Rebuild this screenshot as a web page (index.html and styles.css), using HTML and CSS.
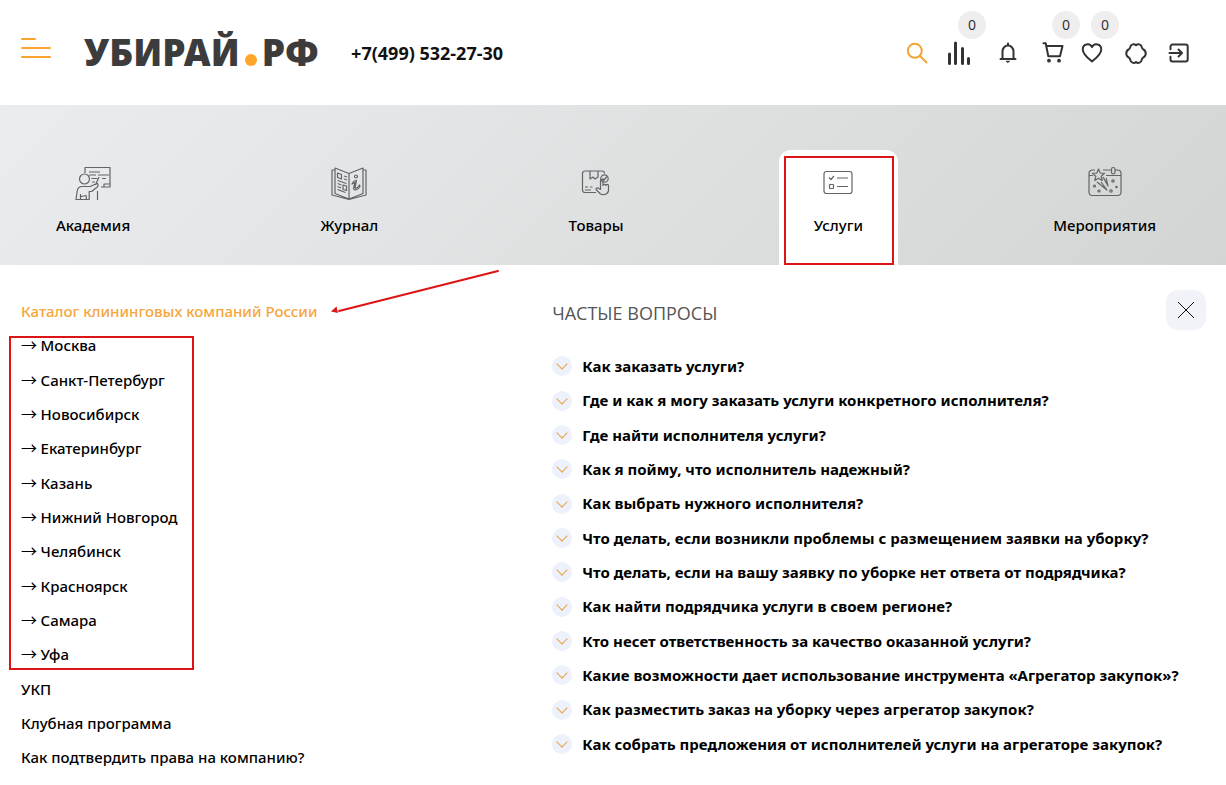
FILE: index.html
```html
<!DOCTYPE html>
<html lang="ru">
<head>
<meta charset="utf-8">
<meta name="viewport" content="width=device-width, initial-scale=1">
<title>Убирай.рф — Услуги</title>
<link rel="stylesheet" href="styles.css">
</head>
<body>
<header class="header">
  <button class="menu-button" type="button" aria-label="Меню">
    <svg width="30" height="20" viewBox="0 0 30 20" fill="none" stroke="#fba42f" stroke-width="2" stroke-linecap="round"><path d="M1 1h13M1 10h28M1 19h28"/></svg>
  </button>
  <a class="logo" href="#"><span>УБИРАЙ</span><i class="logo-dot"></i><span>РФ</span></a>
  <a class="phone" href="tel:+74995322730">+7(499) 532-27-30</a>
  <div class="tools">
    <button class="tool tool-search" type="button" aria-label="Поиск">
      <svg viewBox="0 0 24 24"><circle cx="9.800" cy="9.800" r="7"/><path d="M15 15l6.500 6.500"/></svg>
    </button>
    <button class="tool" type="button" aria-label="Сравнение">
      <svg viewBox="0 0 24 24" class="bars"><path d="M2.500 13v9.500M8.500 2v20.500M15.500 7.500v15M21.500 17.500v5"/></svg>
      <span class="badge">0</span>
    </button>
    <button class="tool" type="button" aria-label="Уведомления">
      <svg viewBox="0 0 24 24"><path d="M4.500 18h15M6.500 18v-7.500a5.500 6 0 0 1 11 0V18M12 4V2.500"/><path d="M10.500 20.300h3L12 21.300z" fill="currentColor" stroke-width="1"/></svg>
    </button>
    <button class="tool" type="button" aria-label="Корзина">
      <svg viewBox="0 0 24 24"><path d="M2.500 2.200h2.200L7.300 15.200h11.700L21.500 5H5.300"/><circle cx="8" cy="19.700" r="1.300" fill="currentColor" stroke-width="1.200"/><circle cx="18" cy="19.700" r="1.300" fill="currentColor" stroke-width="1.200"/></svg>
      <span class="badge">0</span>
    </button>
    <button class="tool" type="button" aria-label="Избранное">
      <svg viewBox="0 0 24 24"><path d="M12 20.500C8.500 17.500 2.800 13.500 2.800 8.500A4.800 4.800 0 0 1 12 6.200a4.800 4.800 0 0 1 9.200 2.300c0 5-5.700 9-9.200 12z"/></svg>
      <span class="badge">0</span>
    </button>
    <button class="tool" type="button" aria-label="Услуги">
      <svg viewBox="0 0 24 24"><path d="M12 4.300c1.700-1.800 5.300-1.300 5.800 1.900.2 1.200.7 1.800 1.600 2.300 3.100 1.600 3.100 6.200 0 7.800-.9.500-1.400 1.100-1.600 2.300-.5 3.200-3.700 4.100-5.800 2.500-2.100 1.600-5.300.7-5.800-2.500-.2-1.200-.7-1.800-1.600-2.300-3.100-1.600-3.100-6.200 0-7.800.9-.5 1.400-1.100 1.600-2.300C6.700 3 10.300 2.500 12 4.300z"/></svg>
    </button>
    <button class="tool" type="button" aria-label="Войти">
      <svg viewBox="0 0 24 24"><path d="M3.500 8.300V5.500a2 2 0 0 1 2-2h13.200a2 2 0 0 1 2 2v13a2 2 0 0 1-2 2H5.500a2 2 0 0 1-2-2v-2.800M2.500 12h12.500M11.500 8.500L15 12l-3.500 3.500"/></svg>
    </button>
  </div>
</header>

<nav class="sections">
  <a class="section" href="#">
    <svg viewBox="0 0 36 36"><path d="M10 8V2.500h25V22h-9M14 7h11M14 10h7M23 10h11M16.500 13.500h6M27 13.500h4M17 17h3M29 22v-3h6"/><circle cx="9.500" cy="14" r="5"/><path d="M1 34.500l1.200-8.500c.5-3 2-4.500 5-4.500h8l5.500-2.500c2-1.500 3.500 1 1.500 3l-5.500 4.500h-2.500v8zM5.500 34.500V29M11.500 34.500l-.5-4-5 1M20.500 20l3.500-8M22.500 26v9"/></svg>
    Академия
  </a>
  <a class="section" href="#">
    <svg viewBox="0 0 36 36"><path d="M4 3l14 5.500L32 3v25.500l-14 5.500-14-5.500zM18 8.500V34M4 5H1v25l17 4.500L35 30V5h-3"/><path d="M6.500 8l4 1.500v4.500l-4-1.500zM13 11l3 1M13 14l3 1M6.500 15.500l9 3M6.500 18.500l4 1.500M12 20l3.500 1v4.500L12 24.500zM6.500 21.500l3.500 1.500M6.500 24.500l8 3"/><circle cx="25" cy="11.500" r="1.500"/><path d="M21 19c1-2.500 3-3.500 4.500-3.500L24 22.500c0 1.500 2.500.5 4.500-2.500l.5 1.500c-2 3.500-6 4.500-6.500 2l1.500-6z"/></svg>
    Журнал
  </a>
  <a class="section" href="#">
    <svg viewBox="0 0 36 36"><path d="M18 27.500H7c-1.500 0-2.500-1-2.500-2.500V8.500C4.500 7 5.500 6 7 6h17c1.500 0 2.500 1 2.500 2.500M12 6v8l3-2 2 2 3-2V6M7 22h3M12 22h2.500M7 25h6"/><circle cx="26.500" cy="13.500" r="3.700"/><path d="M24.500 13.500l1.500 1.500 3-3.500M22.500 15.500v9l-2.500-1.500c-2-.5-2.500 1-1.500 2l4 4c3 1.500 8 .5 8-4V20.500c0-1.500-2.500-1.500-2.500 0-.5-1.500-3-1.500-3 0V15.500c0-1.500-2.500-1.500-2.500 0"/></svg>
    Товары
  </a>
  <a class="section section-active" href="#" aria-current="page">
    <svg viewBox="0 0 36 36"><rect x="4" y="6.500" width="28" height="22" rx="2.500"/><path d="M9 12.500l2 2 3-3.500M17 13h11M17 21.500h11"/><rect x="9.500" y="19.500" width="4" height="4" rx=".5"/></svg>
    Услуги
  </a>
  <a class="section" href="#">
    <svg viewBox="0 0 36 36"><path d="M8 5H5.500A3.500 3.500 0 0 0 2 8.500V27a3.500 3.500 0 0 0 3.500 3.500h25A3.500 3.500 0 0 0 34 27V8.500A3.500 3.500 0 0 0 30.500 5H28M24 5h-8M2 10.500h4M19 10.500h15"/><rect x="24.500" y="2.500" width="3.500" height="6.500" rx="1.700"/><path d="M11.500 4l1.700 4 4.300.4-3.300 2.900 1 4.200-3.700-2.200-3.700 2.200 1-4.200-3.300-2.900 4.300-.4zM10 17l10 8-6-8M16 12l5 9-2-8"/><circle cx="7.500" cy="21" r="1"/><circle cx="12" cy="26" r="1"/><circle cx="26" cy="16" r="1.200"/><circle cx="29.500" cy="22" r=".7"/><circle cx="24" cy="26" r="1.200"/></svg>
    Мероприятия
  </a>
</nav>

<main class="panel">
  <section class="catalog">
    <svg class="pointer" viewBox="0 0 170 46"><path d="M167 2L8 42" stroke="#dc1414" stroke-width="2" stroke-linecap="round"/><path d="M0 42.500l5.500-5 1.500 6.500z" fill="#dc1414"/></svg>
    <a class="catalog-link catalog-title" href="#">Каталог клининговых компаний России</a>
    <ul class="cities">
      <li><a class="catalog-link" href="#">Москва</a></li>
      <li><a class="catalog-link" href="#">Санкт-Петербург</a></li>
      <li><a class="catalog-link" href="#">Новосибирск</a></li>
      <li><a class="catalog-link" href="#">Екатеринбург</a></li>
      <li><a class="catalog-link" href="#">Казань</a></li>
      <li><a class="catalog-link" href="#">Нижний Новгород</a></li>
      <li><a class="catalog-link" href="#">Челябинск</a></li>
      <li><a class="catalog-link" href="#">Красноярск</a></li>
      <li><a class="catalog-link" href="#">Самара</a></li>
      <li><a class="catalog-link" href="#">Уфа</a></li>
    </ul>
    <a class="catalog-link" href="#">УКП</a>
    <a class="catalog-link" href="#">Клубная программа</a>
    <a class="catalog-link" href="#">Как подтвердить права на компанию?</a>
  </section>

  <section class="faq">
    <div class="faq-head">
      <h2 class="faq-title">ЧАСТЫЕ ВОПРОСЫ</h2>
      <button class="close" type="button" aria-label="Закрыть"><svg width="16" height="16" viewBox="0 0 16 16" stroke="#111" stroke-width="1"><path d="M0 0l16 16M16 0L0 16"/></svg></button>
    </div>
    <button class="question" type="button"><i class="chevron"></i>Как заказать услуги?</button>
    <button class="question" type="button"><i class="chevron"></i>Где и как я могу заказать услуги конкретного исполнителя?</button>
    <button class="question" type="button"><i class="chevron"></i>Где найти исполнителя услуги?</button>
    <button class="question" type="button"><i class="chevron"></i>Как я пойму, что исполнитель надежный?</button>
    <button class="question" type="button"><i class="chevron"></i>Как выбрать нужного исполнителя?</button>
    <button class="question" type="button"><i class="chevron"></i>Что делать, если возникли проблемы с размещением заявки на уборку?</button>
    <button class="question" type="button"><i class="chevron"></i>Что делать, если на вашу заявку по уборке нет ответа от подрядчика?</button>
    <button class="question" type="button"><i class="chevron"></i>Как найти подрядчика услуги в своем регионе?</button>
    <button class="question" type="button"><i class="chevron"></i>Кто несет ответственность за качество оказанной услуги?</button>
    <button class="question" type="button"><i class="chevron"></i>Какие возможности дает использование инструмента «Агрегатор закупок»?</button>
    <button class="question" type="button"><i class="chevron"></i>Как разместить заказ на уборку через агрегатор закупок?</button>
    <button class="question" type="button"><i class="chevron"></i>Как собрать предложения от исполнителей услуги на агрегаторе закупок?</button>
  </section>
</main>
</body>
</html>
```

FILE: styles.css
```css
* {
  box-sizing: border-box;
}

body {
  margin: 0;
  background: #fff;
  color: #000;
  font-family: "Noto Sans", "Noto Sans CJK SC", sans-serif;
  font-size: 15px;
  font-weight: 500;
  line-height: 1.49;
}

a {
  color: inherit;
  text-decoration: none;
}

button {
  padding: 0;
  border: 0;
  background: none;
  color: inherit;
  font: inherit;
  cursor: pointer;
}

svg {
  display: block;
  fill: none;
}

.header {
  display: flex;
  align-items: center;
  height: 105px;
  padding: 0 35px 0 21px;
}

.menu-button {
  margin: 0 33px 10px 0;
}

.logo {
  display: flex;
  align-items: baseline;
  gap: 5px;
  margin: 0 32px 2px 0;
  color: #3c3c3c;
  font-size: 37px;
  font-weight: 900;
  line-height: 56px;
}

.logo-dot {
  width: 12px;
  height: 12px;
  border-radius: 50%;
  background: #ffa62b;
}

.phone {
  padding-top: 2px;
  color: #111;
  font-size: 18px;
  font-weight: 700;
}

.tools {
  display: grid;
  grid-template-columns: 42px 49px 45px 39px 44px 43px 24px;
  margin-left: auto;
  color: #333;
}

.tool {
  position: relative;
  width: 24px;
  height: 24px;
}

.tool svg {
  width: 24px;
  height: 24px;
  stroke: currentColor;
  stroke-width: 2;
  stroke-linecap: round;
  stroke-linejoin: round;
}

.tool .bars {
  stroke-width: 3;
}

.tool-search {
  color: #f5a433;
}

.badge {
  position: absolute;
  top: -30px;
  left: 11px;
  width: 28px;
  height: 28px;
  border-radius: 50%;
  background: #efedee;
  font-size: 14px;
  font-weight: 400;
  line-height: 28px;
  text-align: center;
}

.sections {
  display: flex;
  justify-content: space-between;
  padding: 45px 35px 0 21px;
  background: linear-gradient(135deg, #ebecee, #d3d5d4);
}

.section {
  position: relative;
  display: flex;
  flex-direction: column;
  align-items: center;
  gap: 12px;
  height: 115px;
  padding: 15px 35px 0;
  line-height: 24px;
}

.section svg {
  width: 36px;
  height: 36px;
  stroke: #626466;
  stroke-width: 1.2;
  stroke-linejoin: round;
}

.section-active {
  border-radius: 12px 12px 0 0;
  background: #fff;
}

.section-active::after {
  content: "";
  position: absolute;
  inset: 6px 4px 0 5px;
  border: 2px solid #dc1414;
}

.panel {
  display: grid;
  grid-template-columns: 13fr 16fr;
  padding: 25px 20px 10px 21px;
}

.catalog {
  position: relative;
  padding-top: 4px;
}

.catalog-link {
  display: block;
  padding: 6px 0;
}

.catalog-title {
  color: #f6a63c;
}

.cities {
  position: relative;
  width: 160px;
  margin: 0;
  padding: 0;
  list-style: none;
  white-space: nowrap;
}

.cities::after {
  content: "";
  position: absolute;
  inset: 8px -13px 2px -12px;
  border: 2px solid #dc1414;
  pointer-events: none;
}

.cities .catalog-link::before {
  content: "→ ";
  font-family: "Noto Sans CJK SC", sans-serif;
  font-size: 16px;
  font-weight: 400;
  line-height: 1;
}

.pointer {
  position: absolute;
  top: -21px;
  left: 310px;
  width: 170px;
  height: 46px;
}

.faq-head {
  display: flex;
  align-items: flex-start;
  justify-content: space-between;
  padding-bottom: 13px;
}

.faq-title {
  margin: 0;
  color: #555;
  font-family: "Open Sans", sans-serif;
  font-size: 18px;
  font-weight: 400;
  line-height: 46px;
}

.close {
  display: grid;
  place-items: center;
  width: 40px;
  height: 40px;
  border-radius: 12px;
  background: #f1f3f8;
}

.question {
  display: flex;
  align-items: center;
  gap: 10px;
  padding: 6px 0;
  font-weight: 700;
  text-align: left;
}

.chevron {
  display: grid;
  place-items: center;
  width: 20px;
  height: 20px;
  border-radius: 50%;
  background: #ecf1fc;
}

.chevron::before {
  content: "";
  width: 7px;
  height: 7px;
  margin-bottom: 4px;
  border: solid #eba23e;
  border-width: 0 1px 1px 0;
  transform: rotate(45deg);
}
```
